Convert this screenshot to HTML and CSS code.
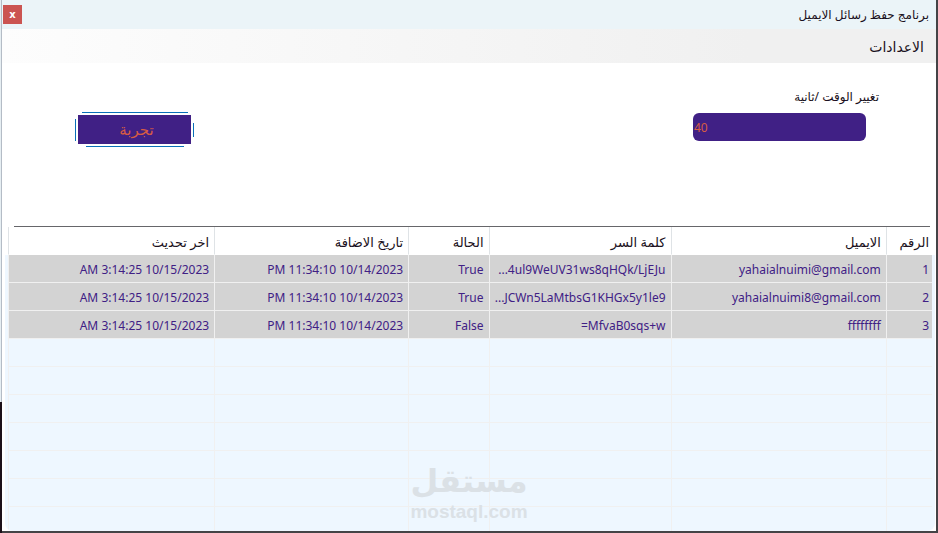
FILE: index.html
```
<!DOCTYPE html>
<html lang="ar" dir="rtl">
<head>
    <meta charset="UTF-8">
    <meta name="viewport" content="width=device-width, initial-scale=1.0">
    <title>برنامج حفظ رسائل الايميل</title>
    <link rel="stylesheet" href="styles.css">
</head>
<body>
    <div class="window">
        <header class="title-bar">
            <h1 class="title">برنامج حفظ رسائل الايميل</h1>
            <button class="close" type="button">x</button>
        </header>
        <nav class="menu-bar">
            <a class="menu-item" href="#">الاعدادات</a>
        </nav>
        <form class="settings">
            <div class="field">
                <label for="seconds">تغيير الوقت /ثانية</label>
                <input type="text" id="seconds" value="40" dir="ltr">
            </div>
            <div class="button-frame">
                <button class="try-button" type="button">تجربة</button>
            </div>
        </form>
        <div class="grid">
            <table class="emails">
                <colgroup>
                    <col class="col-number">
                    <col class="col-email">
                    <col class="col-password">
                    <col class="col-state">
                    <col class="col-added">
                    <col class="col-updated">
                </colgroup>
                <thead>
                    <tr><th>الرقم</th><th>الايميل</th><th>كلمة السر</th><th>الحالة</th><th>تاريخ الاضافة</th><th>اخر تحديث</th></tr>
                </thead>
                <tbody>
                    <tr class="filled">
                        <td>1</td>
                        <td>yahaialnuimi@gmail.com</td>
                        <td>4ul9WeUV31ws8qHQk/LjEJu...</td>
                        <td>True</td>
                        <td>10/14/2023 11:34:10 PM</td>
                        <td>10/15/2023 3:14:25 AM</td>
                    </tr>
                    <tr class="filled">
                        <td>2</td>
                        <td>yahaialnuimi8@gmail.com</td>
                        <td>JCWn5LaMtbsG1KHGx5y1le9...</td>
                        <td>True</td>
                        <td>10/14/2023 11:34:10 PM</td>
                        <td>10/15/2023 3:14:25 AM</td>
                    </tr>
                    <tr class="filled">
                        <td>3</td>
                        <td>ffffffff</td>
                        <td>MfvaB0sqs+w=</td>
                        <td>False</td>
                        <td>10/14/2023 11:34:10 PM</td>
                        <td>10/15/2023 3:14:25 AM</td>
                    </tr>
                    <tr><td></td><td></td><td></td><td></td><td></td><td></td></tr>
                    <tr><td></td><td></td><td></td><td></td><td></td><td></td></tr>
                    <tr><td></td><td></td><td></td><td></td><td></td><td></td></tr>
                    <tr><td></td><td></td><td></td><td></td><td></td><td></td></tr>
                    <tr><td></td><td></td><td></td><td></td><td></td><td></td></tr>
                    <tr><td></td><td></td><td></td><td></td><td></td><td></td></tr>
                    <tr><td></td><td></td><td></td><td></td><td></td><td></td></tr>
                </tbody>
            </table>
        </div>
        <div class="watermark">
            <span class="watermark-name">مستقل</span>
            <span class="watermark-site" dir="ltr">mostaql.com</span>
        </div>
    </div>
</body>
</html>
```
FILE: styles.css
```
* {
    box-sizing: border-box;
}
body {
    margin: 0;
    height: 100vh;
    padding: 0 2px 2px;
    background:
        linear-gradient(#b4bcc6 0 402px, #1c1018 402px) 1px 0 / 1px 100% no-repeat,
        linear-gradient(#e6eef2 0 402px, #1c1018 402px) left / 1px 100% no-repeat,
        #444346;
    font-family: "Noto Sans", "DejaVu Sans", sans-serif;
    font-size: 12px;
    color: #1a1020;
}
.window {
    position: relative;
    display: flex;
    flex-direction: column;
    height: 100%;
    background: #fff;
    overflow: hidden;
}
.title-bar {
    display: flex;
    align-items: center;
    justify-content: space-between;
    flex: none;
    height: 29px;
    padding: 0 7px 0 1px;
    background: #ebf4f8;
}
.title {
    margin: 0;
    font-size: 12px;
    font-weight: normal;
}
.close {
    width: 19px;
    height: 19px;
    padding: 0;
    border: 0;
    background: #cb5451;
    color: #fff;
    font: bold 10px "DejaVu Sans", sans-serif;
}
.menu-bar {
    display: flex;
    align-items: center;
    flex: none;
    height: 34px;
    padding: 0 12px;
    background: linear-gradient(to left, #f0f0f0 20%, #fdfdfd);
}
.menu-item {
    color: #1a1020;
    font-size: 14px;
    text-decoration: none;
}
.settings {
    display: flex;
    justify-content: space-between;
    flex: none;
    height: 163px;
    padding: 24px 70px 0 73px;
}
.field {
    display: flex;
    flex-direction: column;
    gap: 6px;
}
.field label {
    height: 20px;
    line-height: 20px;
    margin-right: -13px;
}
.field input {
    width: 173px;
    height: 28px;
    padding: 0 1px;
    border: 0;
    border-radius: 6px;
    background: #402085;
    color: #d85c43;
    font: 12px "Noto Sans", sans-serif;
}
/* four thin lines that stop short of the corners */
.button-frame {
    width: 119px;
    height: 35px;
    margin-top: 25px;
    padding: 3px;
    background:
        linear-gradient(#0a70b8, #0a70b8) 50% 0 / 106px 1px no-repeat,
        linear-gradient(#0a70b8, #0a70b8) 50% 100% / 98px 1px no-repeat,
        linear-gradient(#0a70b8, #0a70b8) 0 50% / 1px 22px no-repeat,
        linear-gradient(#0a70b8, #0a70b8) 100% 50% / 1px 14px no-repeat;
}
.try-button {
    width: 100%;
    height: 29px;
    padding: 0 0 0 4px;
    border: 0;
    background: #402085;
    color: #d85c43;
    font: 15px "DejaVu Sans", sans-serif;
}
.grid {
    flex: 1;
    min-height: 0;
    margin: 0 1px 0 3px;
    padding: 0 3px;
    border-radius: 0 0 8px 8px;
    background:
        linear-gradient(#66666a, #66666a) 9px 0 / calc(100% - 14px) 1px no-repeat,
        linear-gradient(#fff 29px, #eef7ff 29px);
    overflow: hidden;
}
.emails {
    width: 100%;
    margin-top: 1px;
    table-layout: fixed;
    border-spacing: 0;
}
.col-number {
    width: 5%;
}
.col-email {
    width: 23.3%;
}
.col-password {
    width: 19.7%;
}
.col-state {
    width: 8.7%;
}
.col-added {
    width: 21%;
}
.emails th,
.emails td {
    height: 28px;
    padding: 2px 5px 0;
    border-left: 1px solid #f0f0f0;
    border-bottom: 1px solid #f0f0f0;
    text-align: right;
    white-space: nowrap;
    overflow: hidden;
}
.emails th {
    border-left-color: #dfe3e6;
    border-bottom-color: #fff;
    background: #fff;
    font-weight: normal;
    font-size: 13px;
}
.emails th:first-child,
.emails td:first-child {
    padding-right: 3px;
}
.filled td {
    background: #d3d3d3;
    color: #402085;
}
.watermark {
    position: absolute;
    bottom: 8px;
    left: 50%;
    display: flex;
    flex-direction: column;
    align-items: center;
    transform: translateX(-50%);
    color: #dbe1e6;
    pointer-events: none;
}
.watermark-name {
    font: bold 32px/40px "DejaVu Sans", sans-serif;
}
.watermark-site {
    font: bold 19px/22px "Liberation Sans", sans-serif;
}
```
